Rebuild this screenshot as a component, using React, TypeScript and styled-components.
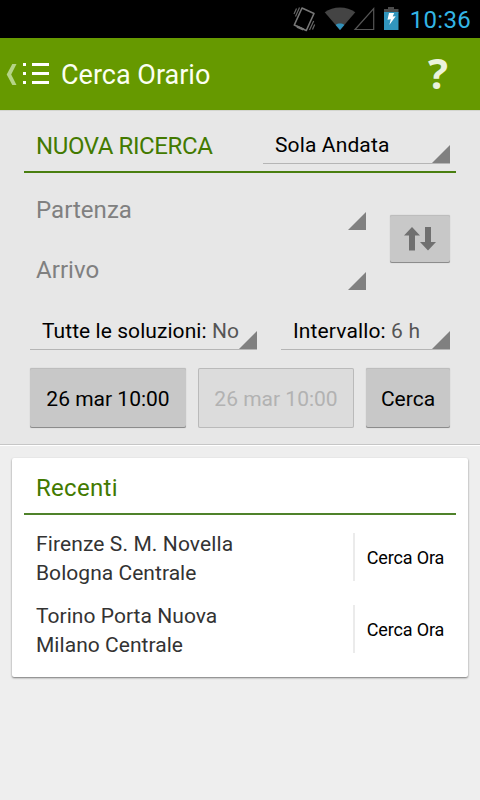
import React from 'react';
import styled, { createGlobalStyle, css } from 'styled-components';

const GlobalStyle = createGlobalStyle`
  *, *::before, *::after { box-sizing: border-box; }
  body {
    margin: 0;
    background: #eeeeee;
    font-family: Roboto, "Liberation Sans", sans-serif;
  }
  button { font: inherit; margin: 0; border: 0; background: none; cursor: pointer; }
`;

const Screen = styled.div`
  display: flex;
  flex-direction: column;
  width: 480px;
  height: 800px;
  overflow: hidden;
  background: #eeeeee;
`;

const StatusBar = styled.div`
  display: flex;
  justify-content: flex-end;
  height: 38px;
  padding-right: 9px;
  background: #000;
`;

const Clock = styled.span`
  margin-left: 10px;
  font-size: 24px;
  line-height: 40px;
  letter-spacing: 0.3px;
  color: #33b5e5;
`;

const ActionBar = styled.header`
  display: flex;
  align-items: center;
  height: 72px;
  padding: 0 32px 0 0;
  background: #669900;
`;

const Title = styled.h1`
  flex: 1;
  margin: 0 0 0 11px;
  padding-top: 2px;
  font-size: 27px;
  font-weight: 400;
  line-height: 72px;
  color: #fbfff2;
`;

const HelpButton = styled.button`
  padding: 0 0 2px;
  font-family: "Open Sans", "Noto Sans", sans-serif;
  font-size: 42px;
  font-weight: 700;
  line-height: 70px;
  color: #ebf3dc;
`;

const SearchPanel = styled.section`
  display: flex;
  flex-direction: column;
  height: 335px;
  padding: 10px 24px 0;
  background: #e7e7e7;
  border-top: 1px solid #d3d5cf;
  border-bottom: 1px solid #c6c6c6;
`;

const PanelHeading = styled.div`
  display: flex;
  justify-content: space-between;
  align-items: flex-end;
  height: 52px;
  padding: 0 6px 7px 12px;
  border-bottom: 2px solid #4a7f10;
`;

const SectionTitle = styled.h2<{ $spacing: string }>`
  margin: 0;
  font-size: 24px;
  font-weight: 400;
  line-height: 36px;
  letter-spacing: ${(p) => p.$spacing};
  color: #437a00;
`;

const corner = css`
  &::after {
    content: '';
    flex: none;
    align-self: flex-end;
    width: 18px;
    height: 18px;
    background: #808080;
    clip-path: polygon(100% 0, 100% 100%, 0 100%);
  }
`;

const Spinner = styled.button<{ $width: number; $spacing?: string }>`
  display: flex;
  justify-content: space-between;
  width: ${(p) => p.$width}px;
  height: 38px;
  padding: 0 0 0 12px;
  border-bottom: 1px solid #b5b5b5;
  font-size: 21px;
  line-height: 38px;
  letter-spacing: ${(p) => p.$spacing ?? 'normal'};
  white-space: nowrap;
  color: #000;
  ${corner}
`;

const SpinnerValue = styled.span`
  color: #555;
`;

const RouteFields = styled.div`
  display: flex;
  justify-content: space-between;
  align-items: center;
  height: 120px;
  margin-top: 7px;
  padding: 0 6px 0 12px;
`;

const StationList = styled.div`
  display: flex;
  flex-direction: column;
  width: 330px;
`;

const StationField = styled.button`
  display: flex;
  justify-content: space-between;
  height: 60px;
  padding: 0 0 10px;
  font-size: 24px;
  line-height: 60px;
  letter-spacing: 0.05px;
  color: #808080;
  ${corner}
`;

const raised = css`
  background: #c8c8c8;
  border-radius: 2px;
  box-shadow: inset 0 1px 0 #bdbdbd, inset 0 -1px 0 #8c8c8c, 0 0 1px #aaa;
`;

const SwapButton = styled.button`
  display: flex;
  justify-content: center;
  align-items: center;
  width: 60px;
  height: 48px;
  margin-bottom: 2px;
  padding: 0;
  ${raised}
`;

const OptionRow = styled.div`
  display: flex;
  justify-content: space-between;
  margin-top: 12px;
  padding: 0 6px;
`;

const ActionRow = styled.div`
  display: grid;
  grid-template-columns: 156px 156px 84px;
  gap: 12px;
  margin-top: 18px;
  padding: 0 6px;
`;

const PanelButton = styled.button`
  height: 60px;
  padding: 2px 0 0;
  font-size: 21px;
  line-height: 58px;
  color: #000;
  ${raised}

  &:disabled {
    background: #dcdcdc;
    box-shadow: inset 0 0 0 1px #bababa;
    color: #b2b2b2;
    cursor: default;
  }
`;

const Recents = styled.section`
  margin: 0 12px;
  height: 219px;
  padding: 4px 12px 12px;
  background: #fff;
  border-radius: 2px;
  box-shadow: 0 1px 2px rgba(0, 0, 0, 0.5);
`;

const Highlight = styled.div`
  flex: none;
  height: 13px;
  border-top: 1px solid #fff;
`;

const RecentsHeading = styled.div`
  height: 53px;
  padding: 8px 12px 0;
  margin-bottom: 6px;
  border-bottom: 2px solid #4f822a;
`;

const RecentRow = styled.div`
  display: flex;
  justify-content: space-between;
  align-items: center;
  height: 72px;
  padding-left: 12px;
`;

const Route = styled.div`
  display: flex;
  flex-direction: column;
  padding-top: 4px;
  font-size: 21px;
  line-height: 29px;
  color: #333;
`;

const Station = styled.span<{ $spacing: string }>`
  letter-spacing: ${(p) => p.$spacing};
`;

const SearchNow = styled.button`
  width: 103px;
  height: 48px;
  padding: 1px 0 0;
  border-left: 2px solid #ebebeb;
  font-size: 18px;
  line-height: 47px;
  letter-spacing: -0.15px;
  color: #000;
`;

const StatusIcons = () => (
  <svg width="108" height="38" viewBox="292 0 108 38" fill="none" aria-hidden="true">
    <path d="M302 8 L314 13.5 L306.3 30.5 L294.3 25 Z" stroke="#777" strokeWidth="1.6" strokeLinejoin="round" />
    <path d="M297 26.7 L303.5 29.5" stroke="#777" strokeWidth="2.4" />
    <path d="M299.5 7.5 L295.5 16.5 M296.5 8.5 L294 14 M309.5 30 L313.7 21 M312.5 29.5 L314.7 24.5" stroke="#666" strokeWidth="1.2" />
    <path d="M340 30 L324.7 12.2 C333 5.8 347 5.8 355.3 12.2 Z" fill="#444" />
    <path d="M340 30 L335.6 24.9 C338 23.1 342 23.1 344.4 24.9 Z" fill="#3291ba" />
    <path d="M355 29.5 H373.7 V8.5 Z" stroke="#555" strokeWidth="1.2" />
    <path d="M388 7 H394 V9 H398.5 V13 H384 V9 H388 Z" fill="#4b4b4b" />
    <path d="M384 12 H398.5 V30 H384 Z" fill="#3195bd" />
    <path d="M389 13 H394.2 L392.7 16.6 L395.7 16.3 L389.3 25 L390.8 19.3 L387.5 19.8 Z" fill="#fff" />
  </svg>
);

const MenuIcon = () => (
  <svg width="50" height="72" viewBox="0 0 50 72" aria-hidden="true">
    <path d="M16.5 26 H12.3 L6.7 36.5 L12.3 47 H16.5 L11.2 36.5 Z" fill="#b5d487" />
    <path d="M23 25h3v3h-3z M32 25h17v3H32z M23 34h3v3h-3z M32 34h17v3H32z M23 43h3v3h-3z M32 43h17v3H32z" fill="#fff" />
  </svg>
);

const SwapIcon = () => (
  <svg width="34" height="24" viewBox="0 0 34 24" fill="#707070" aria-hidden="true">
    <path d="M9 0 L17 8.5 H12 V23.5 H6 V8.5 H1 Z" />
    <path d="M22 0 H28 V15 H33 L25 23.5 L17 15 H22 Z" />
  </svg>
);

const recents = [
  { from: 'Firenze S. M. Novella', to: 'Bologna Centrale', spacing: '0.11px' },
  { from: 'Torino Porta Nuova', to: 'Milano Centrale', spacing: '0.04px' },
];

export default function App() {
  return (
    <Screen>
      <GlobalStyle />
      <StatusBar>
        <StatusIcons />
        <Clock>10:36</Clock>
      </StatusBar>
      <ActionBar>
        <MenuIcon />
        <Title>Cerca Orario</Title>
        <HelpButton>?</HelpButton>
      </ActionBar>
      <SearchPanel>
        <PanelHeading>
          <SectionTitle $spacing="-0.4px">NUOVA RICERCA</SectionTitle>
          <Spinner $width={187} $spacing="0.13px">Sola Andata</Spinner>
        </PanelHeading>
        <RouteFields>
          <StationList>
            <StationField>Partenza</StationField>
            <StationField>Arrivo</StationField>
          </StationList>
          <SwapButton aria-label="Inverti">
            <SwapIcon />
          </SwapButton>
        </RouteFields>
        <OptionRow>
          <Spinner $width={227} $spacing="0.06px">
            <span>Tutte le soluzioni: <SpinnerValue>No</SpinnerValue></span>
          </Spinner>
          <Spinner $width={169} $spacing="0.13px">
            <span>Intervallo: <SpinnerValue>6 h</SpinnerValue></span>
          </Spinner>
        </OptionRow>
        <ActionRow>
          <PanelButton>26 mar 10:00</PanelButton>
          <PanelButton disabled>26 mar 10:00</PanelButton>
          <PanelButton>Cerca</PanelButton>
        </ActionRow>
      </SearchPanel>
      <Highlight />
      <Recents>
        <RecentsHeading>
          <SectionTitle $spacing="0.3px">Recenti</SectionTitle>
        </RecentsHeading>
        {recents.map((r) => (
          <RecentRow key={r.from}>
            <Route>
              <Station $spacing={r.spacing}>{r.from}</Station>
              <Station $spacing="0.04px">{r.to}</Station>
            </Route>
            <SearchNow>Cerca Ora</SearchNow>
          </RecentRow>
        ))}
      </Recents>
    </Screen>
  );
}
